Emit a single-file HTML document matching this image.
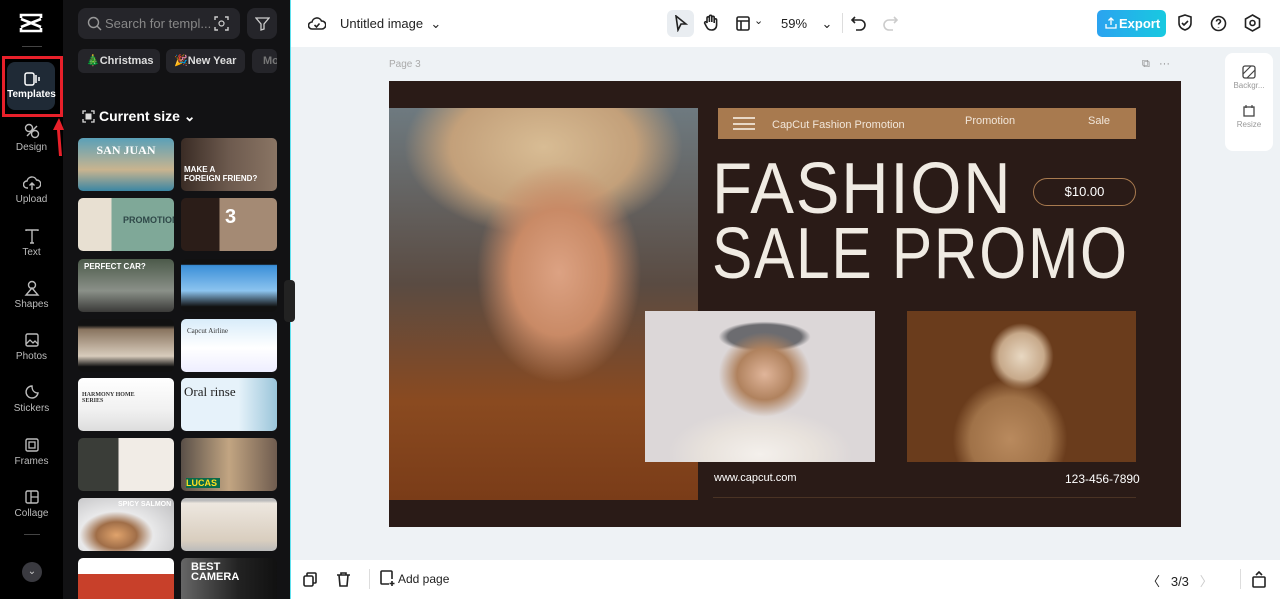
<!DOCTYPE html>
<html style="width:1280px;height:599px;overflow:hidden"><head><meta charset="utf-8"><style>
*{box-sizing:border-box;margin:0;padding:0}
body{width:1280px;height:599px;overflow:hidden;font-family:"Liberation Sans",sans-serif;background:#eef2f5;position:relative}
.a{position:absolute;white-space:nowrap}
.rail{left:0;top:0;width:63px;height:599px;background:#000}
.panel{left:63px;top:0;width:227px;height:599px;background:#121214}
.nav{position:absolute;left:0;width:63px;text-align:center;color:#bbb;font-size:10px}
.nav svg{display:block;margin:0 auto 3px}
.chip{position:absolute;top:49px;height:24px;border-radius:6px;background:#25252a;color:#ddd;font-size:11px;font-weight:bold;line-height:24px;padding:0 8px;white-space:nowrap;overflow:hidden}
.t{position:absolute;width:96px;height:53px;border-radius:5px;overflow:hidden;white-space:nowrap}
.top{left:291px;top:0;width:989px;height:47px;background:#fff}
.bot{left:291px;top:560px;width:989px;height:39px;background:#fff}
.ic{position:absolute;stroke:#222;fill:none;stroke-width:1.6}
</style></head><body>
<div class="a rail"></div>
<div class="a panel"></div>
<div class="a" style="left:290px;top:0;width:1px;height:599px;background:#5fe0ee"></div>
<svg class="a" style="left:18px;top:13px" width="26" height="20" viewBox="0 0 26 20"><path d="M3 5V2h20v3M3 15v3h20v-3M3 6l20 8M23 6L3 14" stroke="#fff" stroke-width="2.6" fill="none"/></svg>
<div class="a" style="left:22px;top:46px;width:20px;height:1px;background:#444"></div>
<div class="a" style="left:2px;top:56px;width:61px;height:61px;border:3px solid #e8202a"></div>
<div class="a" style="left:7px;top:62px;width:48px;height:48px;border-radius:8px;background:#1f2a36"></div>
<div class="nav" style="top:72px;color:#fff;font-weight:bold;left:0"><svg width="16" height="14" viewBox="0 0 16 14"><rect x="1" y="1" width="9" height="12" rx="2" stroke="#fff" fill="none" stroke-width="1.5"/><path d="M12 3v8M15 5v4" stroke="#fff" stroke-width="1.5"/></svg>Templates</div>
<svg class="a" style="left:52px;top:116px" width="14" height="42" viewBox="0 0 14 42"><path d="M7 2L1 14h4l2 26h3L8 14h4z" fill="#e8202a"/></svg>
<div class="nav" style="top:123px"><svg width="16" height="16" viewBox="0 0 16 16"><circle cx="5" cy="5" r="3.5" stroke="#bbb" fill="none" stroke-width="1.4"/><circle cx="11" cy="11" r="3.5" stroke="#bbb" fill="none" stroke-width="1.4"/><path d="M3 13L13 3" stroke="#bbb" stroke-width="1.4"/></svg>Design</div>
<div class="nav" style="top:175px"><svg width="18" height="16" viewBox="0 0 18 16"><path d="M5 13H4a3.5 3.5 0 010-7 5 5 0 019.5-1A3.5 3.5 0 0114 13h-1M9 8v7M6.5 10.5L9 8l2.5 2.5" stroke="#bbb" fill="none" stroke-width="1.4"/></svg>Upload</div>
<div class="nav" style="top:228px"><svg width="16" height="16" viewBox="0 0 16 16"><path d="M2 3V2h12v1M8 2v13M6 15h4" stroke="#bbb" fill="none" stroke-width="1.4"/></svg>Text</div>
<div class="nav" style="top:280px"><svg width="16" height="16" viewBox="0 0 16 16"><circle cx="8" cy="5" r="3.5" stroke="#bbb" fill="none" stroke-width="1.4"/><path d="M8 8l-6 7h12z" stroke="#bbb" fill="none" stroke-width="1.4"/></svg>Shapes</div>
<div class="nav" style="top:332px"><svg width="16" height="16" viewBox="0 0 16 16"><rect x="2" y="2" width="12" height="12" rx="1.5" stroke="#bbb" fill="none" stroke-width="1.4"/><path d="M2 12l4-4 3 3 2-2 3 3" stroke="#bbb" fill="none" stroke-width="1.3"/></svg>Photos</div>
<div class="nav" style="top:384px"><svg width="16" height="16" viewBox="0 0 16 16"><path d="M14 9A6 6 0 118 2c0 4 2 7 6 7z" stroke="#bbb" fill="none" stroke-width="1.4"/></svg>Stickers</div>
<div class="nav" style="top:437px"><svg width="16" height="16" viewBox="0 0 16 16"><rect x="2" y="2" width="12" height="12" rx="1.5" stroke="#bbb" fill="none" stroke-width="1.4"/><rect x="5" y="5" width="6" height="6" stroke="#bbb" fill="none" stroke-width="1.3"/></svg>Frames</div>
<div class="nav" style="top:489px"><svg width="16" height="16" viewBox="0 0 16 16"><rect x="2" y="2" width="12" height="12" rx="1.5" stroke="#bbb" fill="none" stroke-width="1.4"/><path d="M7 2v12M7 8h7" stroke="#bbb" stroke-width="1.3"/></svg>Collage</div>
<div class="a" style="left:24px;top:534px;width:16px;height:1px;background:#444"></div>
<div class="a" style="left:22px;top:562px;width:20px;height:20px;border-radius:50%;background:#3a3a40;color:#ccc;font-size:10px;text-align:center;line-height:20px">⌄</div>
<div class="a" style="left:78px;top:8px;width:162px;height:31px;border-radius:8px;background:#25252a;color:#888;font-size:13px;line-height:31px;padding-left:27px">Search for templ...</div>
<svg class="a" style="left:87px;top:16px" width="15" height="15"><circle cx="6.5" cy="6.5" r="5" stroke="#999" fill="none" stroke-width="1.4"/><path d="M10 10l4 4" stroke="#999" stroke-width="1.4"/></svg>
<svg class="a" style="left:214px;top:16px" width="15" height="15"><path d="M1 4V1h3M11 1h3v3M14 11v3h-3M4 14H1v-3" stroke="#ccc" fill="none" stroke-width="1.4"/><circle cx="7.5" cy="7.5" r="2.5" stroke="#ccc" fill="none" stroke-width="1.2"/></svg>
<div class="a" style="left:247px;top:8px;width:30px;height:31px;border-radius:8px;background:#25252a"></div>
<svg class="a" style="left:255px;top:16px" width="15" height="15"><path d="M1 2h13l-5 6v5l-3 1V8z" stroke="#ccc" fill="none" stroke-width="1.3"/></svg>
<div class="chip" style="left:78px;width:82px">🎄Christmas</div>
<div class="chip" style="left:166px;width:79px">🎉New Year</div>
<div class="chip" style="left:252px;width:25px;padding:0 0 0 11px;color:#777">Mo</div>
<svg class="a" style="left:82px;top:110px" width="13" height="13"><path d="M1 4V1h3M9 1h3v3M12 9v3H9M4 12H1V9" stroke="#ddd" fill="none" stroke-width="1.3"/><rect x="3.5" y="3.5" width="6" height="6" fill="#ddd"/></svg>
<div class="a" style="left:99px;top:108px;color:#fff;font-size:14px;font-weight:bold">Current size ⌄</div>
<div class="t" style="left:78px;top:138px;background:linear-gradient(180deg,#5aa0b8 0%,#c9b48f 60%,#3b86a3 100%)"><div style="color:#fff;font-size:12px;font-weight:bold;text-align:center;margin-top:5px;font-family:'Liberation Serif'">SAN JUAN</div></div>
<div class="t" style="left:181px;top:138px;background:linear-gradient(90deg,#3a2c25,#6d5a4e,#8a7564)"><div style="color:#fff;font-size:8px;font-weight:bold;margin:27px 0 0 3px">MAKE A<br>FOREIGN FRIEND?</div></div>
<div class="t" style="left:78px;top:198px;background:linear-gradient(90deg,#e8e0d2 35%,#7fa898 35%)"><div style="color:#2f4848;font-size:9px;font-weight:bold;margin:17px 0 0 45px">PROMOTION</div></div>
<div class="t" style="left:181px;top:198px;background:linear-gradient(90deg,#2b1d18 40%,#a48a74 40%)"><div style="color:#fff;font-size:20px;font-weight:bold;margin:8px 0 0 44px">3</div></div>
<div class="t" style="left:78px;top:259px;background:linear-gradient(180deg,#4c5a4a,#8a9088 60%,#3a3a38)"><div style="color:#fff;font-size:8px;font-weight:bold;margin:3px 0 0 6px">PERFECT CAR?</div></div>
<div class="t" style="left:181px;top:259px;background:linear-gradient(180deg,#111 10%,#3b8fd8 12%,#8cc4ef 60%,#111 90%)"></div>
<div class="t" style="left:78px;top:319px;background:linear-gradient(180deg,#111 12%,#8a7560 20%,#d8ccbc 70%,#111 90%)"></div>
<div class="t" style="left:181px;top:319px;background:linear-gradient(180deg,#d8ecfa,#fff 55%,#eef)"><div style="color:#333;font-size:7px;margin:8px 0 0 6px;font-family:'Liberation Serif'">Capcut Airline</div></div>
<div class="t" style="left:78px;top:378px;background:linear-gradient(180deg,#fff,#f1f1f1 60%,#ddd)"><div style="color:#333;font-size:6px;font-weight:bold;margin:14px 0 0 4px;font-family:'Liberation Serif'">HARMONY HOME<br>SERIES</div></div>
<div class="t" style="left:181px;top:378px;background:linear-gradient(90deg,#e6f2fa 60%,#9ac5da)"><div style="color:#222;font-size:13px;margin:6px 0 0 3px;font-family:'Liberation Serif'">Oral rinse</div></div>
<div class="t" style="left:78px;top:438px;background:linear-gradient(90deg,#3a3d38 42%,#f1ece6 42%)"></div>
<div class="t" style="left:181px;top:438px;background:linear-gradient(90deg,#5a5048,#c2a582 50%,#6f5c4f)"><div style="color:#ffe020;font-size:9px;font-weight:bold;margin:40px 0 0 5px;background:#0a6a4a;width:34px">LUCAS</div></div>
<div class="t" style="left:78px;top:498px;background:radial-gradient(ellipse at 40% 70%,#e0a36c 0,#a06e48 25%,#e9e9ea 45%,#bcbcbe 100%)"><div style="color:#fff;font-size:7px;font-weight:bold;margin:3px 0 0 40px">SPICY SALMON</div></div>
<div class="t" style="left:181px;top:498px;background:linear-gradient(180deg,#bbb 5%,#ede7df 10%,#d9cebf 80%,#bbb)"></div>
<div class="t" style="left:78px;top:558px;background:linear-gradient(180deg,#fff 30%,#c8402a 30%)"></div>
<div class="t" style="left:181px;top:558px;background:linear-gradient(90deg,#666,#222 60%,#111)"><div style="color:#fff;font-size:11px;font-weight:bold;margin:4px 0 0 10px;line-height:10px">BEST<br>CAMERA</div></div>
<div class="a" style="left:284px;top:280px;width:11px;height:42px;border-radius:4px;background:#222"></div>
<div class="a top"></div>
<svg class="a ic" style="left:308px;top:15px" width="18" height="16" viewBox="0 0 18 16"><path d="M5 14H4a3.5 3.5 0 010-7 5 5 0 019.5-1A3.5 3.5 0 0114 14H5zM6.5 10l2 2 3-3.5"/></svg>
<div class="a" style="left:340px;top:16px;font-size:13px;color:#222">Untitled image&nbsp; ⌄</div>
<div class="a" style="left:667px;top:10px;width:27px;height:27px;border-radius:6px;background:#e9edf1"></div>
<svg class="a ic" style="left:674px;top:15px" width="14" height="17"><path d="M2 1l10 8H7l-3 6z"/></svg>
<svg class="a ic" style="left:703px;top:14px" width="16" height="18"><path d="M4 9V4a1.2 1.2 0 012.4 0v4V2.5a1.2 1.2 0 012.4 0V8V3.5a1.2 1.2 0 012.4 0V9V6a1.2 1.2 0 012.4 0v5c0 3-2 5-5 5s-4-1-6-5l-1-2a1.2 1.2 0 012-1z"/></svg>
<svg class="a ic" style="left:736px;top:16px" width="14" height="15"><rect x="1" y="1" width="12" height="13" rx="1.5"/><path d="M1 5h12M5 5v9"/></svg>
<div class="a" style="left:754px;top:14px;font-size:11px;color:#222">⌄</div>
<div class="a" style="left:781px;top:16px;font-size:13px;color:#222">59%&nbsp;&nbsp;&nbsp; ⌄</div>
<div class="a" style="left:842px;top:13px;width:1px;height:20px;background:#ddd"></div>
<svg class="a ic" style="left:851px;top:15px" width="16" height="16"><path d="M4 2L1 5l3 3M1 5h8a5 5 0 010 10H5"/></svg>
<svg class="a ic" style="left:882px;top:15px;stroke:#ccc" width="16" height="16"><path d="M12 2l3 3-3 3M15 5H7a5 5 0 000 10h4"/></svg>
<div class="a" style="left:1097px;top:10px;width:69px;height:27px;border-radius:5px;background:linear-gradient(90deg,#2ba3f0,#18c9e0);color:#fff;font-size:13px;font-weight:bold;line-height:27px;padding-left:22px">Export</div>
<svg class="a" style="left:1105px;top:17px" width="12" height="12"><path d="M6 1v7M3.5 3.5L6 1l2.5 2.5M1 7v4h10V7" stroke="#fff" fill="none" stroke-width="1.3"/></svg>
<svg class="a ic" style="left:1177px;top:14px" width="16" height="18"><path d="M8 1l6 2v6c0 4-3 6-6 7-3-1-6-3-6-7V3zM5 9l2 2 4-4"/></svg>
<svg class="a ic" style="left:1210px;top:15px" width="17" height="17"><circle cx="8.5" cy="8.5" r="7"/><path d="M6.5 6.5a2 2 0 114 0c0 1.5-2 1.5-2 3M8.5 12v.5"/></svg>
<svg class="a ic" style="left:1244px;top:14px" width="17" height="18"><path d="M8.5 1l7 4v8l-7 4-7-4V5z"/><circle cx="8.5" cy="9" r="2.5"/></svg>
<div class="a" style="left:389px;top:59px;font-size:10px;color:#aaa">Page 3</div>
<div class="a" style="left:1142px;top:58px;font-size:11px;color:#888">⧉&nbsp;&nbsp; ···</div>
<div class="a" style="left:1225px;top:53px;width:48px;height:98px;border-radius:8px;background:#fff;font-size:8px;color:#999;text-align:center">
<svg style="display:block;margin:12px auto 2px" width="14" height="14"><rect x="1" y="1" width="12" height="12" rx="2" stroke="#444" fill="none" stroke-width="1.3"/><path d="M1 9L9 1M5 13l8-8" stroke="#444" stroke-width="1.2"/></svg>Backgr...
<svg style="display:block;margin:14px auto 2px" width="14" height="14"><rect x="2" y="3" width="10" height="9" stroke="#444" fill="none" stroke-width="1.3"/><path d="M4 1v3M10 1v3" stroke="#444" stroke-width="1.2"/></svg>Resize</div>
<div class="a" style="left:389px;top:81px;width:792px;height:446px;background:#2a1b17;overflow:hidden">
 <div class="a" style="left:0;top:27px;width:309px;height:392px;background:radial-gradient(ellipse 38% 40% at 55% 42%,#dca283 0,#c98a66 40%,transparent 70%),radial-gradient(ellipse 60% 30% at 50% 10%,#d8bc94 0,#c3a07a 50%,transparent 75%),linear-gradient(180deg,#6e7a80 0%,#5a4b42 45%,#8a4a20 75%,#7a3c18 100%)"></div>
 <div class="a" style="left:329px;top:27px;width:418px;height:31px;background:#a87a4f;color:#f1e6da;font-size:11px">
  <div class="a" style="left:15px;top:9px;width:22px;height:13px;border-top:2px solid #e8d8c6;border-bottom:2px solid #e8d8c6"></div>
  <div class="a" style="left:15px;top:15px;width:22px;height:2px;background:#e8d8c6"></div>
  <div class="a" style="left:54px;top:11px">CapCut Fashion Promotion</div>
  <div class="a" style="left:247px;top:7px">Promotion</div>
  <div class="a" style="left:370px;top:7px">Sale</div>
 </div>
 <div class="a" style="left:323px;top:72px;color:#f0ebe3;font-size:72px;line-height:72px;transform:scaleX(.91);transform-origin:0 0;letter-spacing:2px">FASHION</div>
 <div class="a" style="left:323px;top:137px;color:#f0ebe3;font-size:72px;line-height:72px;transform:scaleX(.84);transform-origin:0 0;letter-spacing:2px">SALE PROMO</div>
 <div class="a" style="left:644px;top:97px;width:103px;height:28px;border:1.5px solid #a87a4f;border-radius:14px;color:#fff;font-size:13px;text-align:center;line-height:25px">$10.00</div>
 <div class="a" style="left:256px;top:230px;width:230px;height:151px;background:radial-gradient(ellipse 20% 28% at 52% 42%,#e0b59a 0,#b0825e 60%,transparent 100%),radial-gradient(ellipse 40% 30% at 50% 95%,#f4f0ec 0,#e8e2dc 60%,transparent 100%),radial-gradient(ellipse 20% 10% at 52% 17%,#6c6c70 0,#6c6c70 80%,transparent 100%),#dcd7d8"></div>
 <div class="a" style="left:518px;top:230px;width:229px;height:151px;background:radial-gradient(ellipse 25% 40% at 45% 85%,#b98a5e 0,#a07248 70%,transparent 100%),radial-gradient(ellipse 14% 22% at 50% 30%,#e8d8c2 0,#c7a98a 70%,transparent 100%),#6a3c1c"></div>
 <div class="a" style="left:325px;top:391px;color:#fff;font-size:11px">www.capcut.com</div>
 <div class="a" style="left:676px;top:391px;color:#fff;font-size:12px">123-456-7890</div>
 <div class="a" style="left:324px;top:416px;width:423px;height:1px;background:#4a3324"></div>
</div>
<div class="a bot"></div>
<svg class="a ic" style="left:303px;top:572px" width="14" height="15"><rect x="1" y="4" width="9" height="10" rx="1.5"/><path d="M4 4V2a1 1 0 011-1h7a1 1 0 011 1v8a1 1 0 01-1 1h-2"/></svg>
<svg class="a ic" style="left:336px;top:572px" width="15" height="15"><path d="M1 3h13M5 3V1h5v2M3 3l1 11h7l1-11"/></svg>
<div class="a" style="left:369px;top:569px;width:1px;height:20px;background:#ddd"></div>
<svg class="a ic" style="left:379px;top:570px" width="16" height="17"><path d="M10 14H3a1 1 0 01-1-1V2a1 1 0 011-1h9a1 1 0 011 1v7M13 11v5M10.5 13.5h5"/></svg>
<div class="a" style="left:398px;top:572px;font-size:12px;color:#222">Add page</div>
<div class="a" style="left:1147px;top:571px;font-size:13px;color:#222">〈&nbsp;&nbsp; 3/3&nbsp;&nbsp; <span style="color:#ccc">〉</span></div>
<div class="a" style="left:1240px;top:569px;width:1px;height:20px;background:#ddd"></div>
<svg class="a ic" style="left:1252px;top:571px" width="14" height="17"><rect x="1" y="6" width="12" height="10" rx="1"/><path d="M4 4l3-3 3 3"/></svg>
</body></html>
